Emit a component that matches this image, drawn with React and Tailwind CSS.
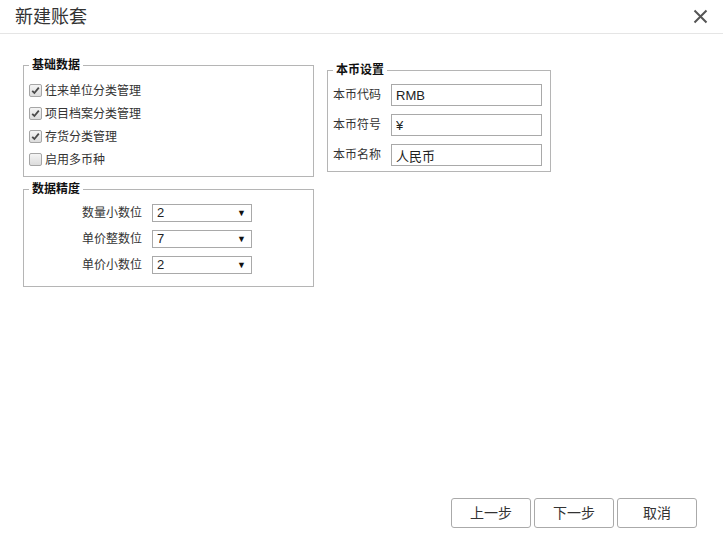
import { useState } from 'react';

const font = { fontFamily: '"Liberation Sans", "Noto Sans CJK SC", sans-serif' };

function Check({ checked, label, onToggle }) {
  return (
    <label className="flex items-center h-[23px] cursor-pointer select-none" onClick={onToggle}>
      <span className="w-[13px] h-[13px] rounded-[2px] border border-[#a6a6a6] bg-gradient-to-b from-[#f4f4f4] to-[#dcdcdc] flex items-center justify-center">
        {checked && (
          <svg width="9" height="9" viewBox="0 0 9 9">
            <path d="M1.2 4.8 L3.4 7 L7.8 1.6" fill="none" stroke="#4a4a4a" strokeWidth="1.8" />
          </svg>
        )}
      </span>
      <span className="ml-[3px] text-[12px] leading-[16px] text-[#333]">{label}</span>
    </label>
  );
}

function Select({ label, value, options, onChange }) {
  return (
    <div className="flex items-center h-[26px]">
      <span className="w-[128px] pr-[10px] text-right text-[12px] leading-[16px] text-[#333]">{label}</span>
      <div className="relative w-[100px] h-[18px]">
        <select value={value} onChange={e => onChange(e.target.value)}
          className="block appearance-none w-full h-full border border-[#a9a9a9] bg-white pl-[4px] py-0 text-[13px] leading-[16px] text-[#222] outline-none">
          {options.map(o => <option key={o} value={o}>{o}</option>)}
        </select>
        <span className="absolute right-[6px] inset-y-0 flex items-center text-[9px] leading-none text-[#111] pointer-events-none">▼</span>
      </div>
    </div>
  );
}

function Field({ label, value, onChange }) {
  return (
    <div className="flex items-center h-[22px]">
      <span className="w-[58px] text-[12px] leading-[16px] text-[#333]">{label}</span>
      <input value={value} onChange={e => onChange(e.target.value)}
        className="block w-[151px] h-[22px] border border-[#a9a9a9] px-[4px] text-[13px] text-[#222] outline-none" />
    </div>
  );
}

export default function App() {
  const [checks, setChecks] = useState([true, true, true, false]);
  const [prec, setPrec] = useState({ qty: '2', int: '7', dec: '2' });
  const [cur, setCur] = useState({ code: 'RMB', sym: '¥', name: '人民币' });
  const digits = ['0', '1', '2', '3', '4', '5', '6', '7', '8'];
  const checkLabels = ['往来单位分类管理', '项目档案分类管理', '存货分类管理', '启用多币种'];

  return (
    <div className="w-[723px] h-[558px] bg-white flex flex-col" style={font}>
      <div className="h-[34px] border-b border-[#e5e5e5] flex items-center justify-between pl-[15px] pr-[15px]">
        <span className="text-[18px] leading-[24px] text-[#333]">新建账套</span>
        <svg width="15" height="15" viewBox="0 0 15 15" className="cursor-pointer">
          <path d="M1.5 1.5 L13.5 13.5 M13.5 1.5 L1.5 13.5" stroke="#555" strokeWidth="2" />
        </svg>
      </div>

      <div className="flex gap-[13px] pl-[23px] pt-[23px]">
        <div className="flex flex-col gap-[4px]">
          <fieldset className="w-[291px] border border-[#b5b5b5] pl-[5px] pt-[6px] pb-[5px]">
            <legend className="px-[3px] text-[12px] leading-[16px] font-bold text-[#111]">基础数据</legend>
            {checkLabels.map((l, i) => (
              <Check key={l} label={l} checked={checks[i]}
                onToggle={e => { e.preventDefault(); setChecks(c => c.map((v, j) => j === i ? !v : v)); }} />
            ))}
          </fieldset>
          <fieldset className="w-[291px] border border-[#b5b5b5] pl-[5px] pt-[3px] pb-[8px]">
            <legend className="px-[3px] text-[12px] leading-[16px] font-bold text-[#111]">数据精度</legend>
            <div className="-ml-[5px]">
              <Select label="数量小数位" value={prec.qty} options={digits} onChange={v => setPrec(p => ({ ...p, qty: v }))} />
              <Select label="单价整数位" value={prec.int} options={digits} onChange={v => setPrec(p => ({ ...p, int: v }))} />
              <Select label="单价小数位" value={prec.dec} options={digits} onChange={v => setPrec(p => ({ ...p, dec: v }))} />
            </div>
          </fieldset>
        </div>

        <fieldset className="w-[224px] self-start mt-[5px] border border-[#b5b5b5] pl-[5px] pt-[6px] pb-[5px] flex flex-col gap-[8px]">
          <legend className="px-[3px] text-[12px] leading-[16px] font-bold text-[#111]">本币设置</legend>
          <Field label="本币代码" value={cur.code} onChange={v => setCur(c => ({ ...c, code: v }))} />
          <Field label="本币符号" value={cur.sym} onChange={v => setCur(c => ({ ...c, sym: v }))} />
          <Field label="本币名称" value={cur.name} onChange={v => setCur(c => ({ ...c, name: v }))} />
        </fieldset>
      </div>

      <div className="mt-auto flex justify-end gap-[3px] pr-[26px] pb-[30px]">
        {['上一步', '下一步', '取消'].map(t => (
          <button key={t} className="w-[80px] h-[30px] border border-[#aaa] rounded-[3px] bg-white text-[14px] text-[#333] hover:bg-[#f3f3f3]">
            {t}
          </button>
        ))}
      </div>
    </div>
  );
}
